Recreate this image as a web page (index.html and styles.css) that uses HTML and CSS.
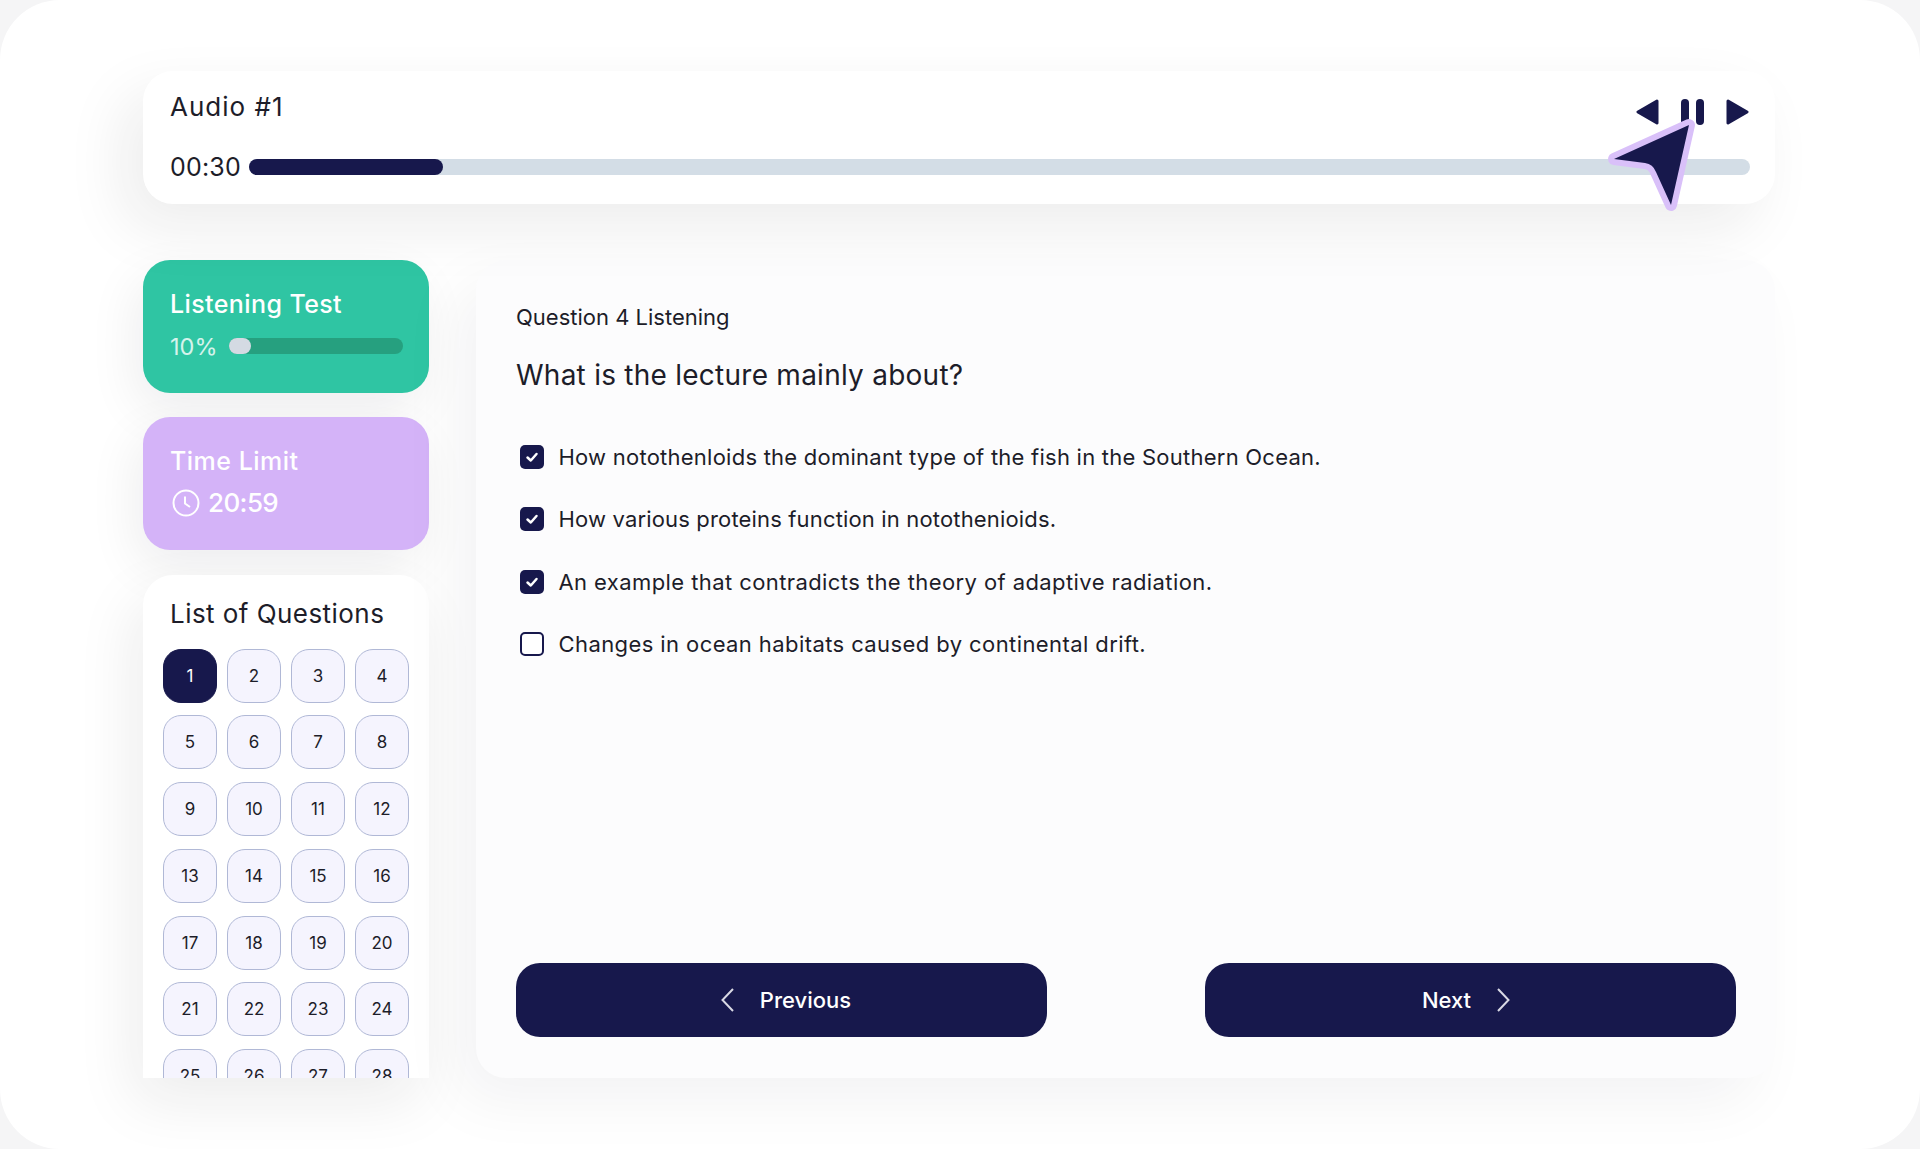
FILE: index.html
```html
<!DOCTYPE html>
<html lang="en">
<head>
    <meta charset="UTF-8">
    <meta name="viewport" content="width=device-width, initial-scale=1.0">
    <title>Listening Test</title>
    <link rel="stylesheet" href="styles.css">
</head>
<body>
    <div class="frame">
        <div class="audio-card">
            <div class="audio-head">
                <div class="audio-title">Audio #1</div>
                <div class="controls">
                    <svg class="ctrl" viewBox="0 0 23 26"><path d="M21 2 L2 13 L21 24 Z"/></svg>
                    <svg class="ctrl" viewBox="0 0 23 26"><rect x="0" y="0" width="8" height="26" rx="4"/><rect x="15" y="0" width="8" height="26" rx="4"/></svg>
                    <svg class="ctrl" viewBox="0 0 23 26"><path d="M2 2 L21 13 L2 24 Z"/></svg>
                </div>
            </div>
            <div class="audio-row">
                <span class="audio-time">00:30</span>
                <div class="audio-track"><div class="audio-fill"></div></div>
            </div>
            <svg class="cursor" viewBox="0 0 100 110" width="100" height="110">
                <path d="M89 15 L14 49 L45 53 Q53 54 56 62 L71 95 Z"/>
            </svg>
        </div>

        <div class="content">
            <div class="side">
                <div class="stat-card green">
                    <div class="stat-title">Listening Test</div>
                    <div class="stat-row">
                        <span class="percent">10%</span>
                        <div class="mini-track"><div class="mini-fill"></div></div>
                    </div>
                </div>
                <div class="stat-card purple">
                    <div class="stat-title limit">Time Limit</div>
                    <div class="stat-row">
                        <svg class="clock" viewBox="0 0 28 28" width="28" height="28">
                            <circle cx="14" cy="14" r="12.5"/>
                            <path d="M13 7.5 V14.5 L18 18"/>
                        </svg>
                        <span class="time-left">20:59</span>
                    </div>
                </div>
                <div class="list-card">
                    <div class="list-title">List of Questions</div>
                    <div class="num-grid">
                        <div class="num active">1</div>
                        <div class="num">2</div>
                        <div class="num">3</div>
                        <div class="num">4</div>
                        <div class="num">5</div>
                        <div class="num">6</div>
                        <div class="num">7</div>
                        <div class="num">8</div>
                        <div class="num">9</div>
                        <div class="num">10</div>
                        <div class="num">11</div>
                        <div class="num">12</div>
                        <div class="num">13</div>
                        <div class="num">14</div>
                        <div class="num">15</div>
                        <div class="num">16</div>
                        <div class="num">17</div>
                        <div class="num">18</div>
                        <div class="num">19</div>
                        <div class="num">20</div>
                        <div class="num">21</div>
                        <div class="num">22</div>
                        <div class="num">23</div>
                        <div class="num">24</div>
                        <div class="num">25</div>
                        <div class="num">26</div>
                        <div class="num">27</div>
                        <div class="num">28</div>
                    </div>
                </div>
            </div>

            <div class="question-card">
                <div class="q-label">Question 4 Listening</div>
                <div class="q-text">What is the lecture mainly about?</div>
                <div class="options">
                    <div class="option">
                        <span class="box checked"><svg viewBox="0 0 24 24" width="24" height="24"><path d="M7.5 12.5 L10.8 15.5 L16.5 9"/></svg></span>
                        <span>How notothenloids the dominant type of the fish in the Southern Ocean.</span>
                    </div>
                    <div class="option narrow">
                        <span class="box checked"><svg viewBox="0 0 24 24" width="24" height="24"><path d="M7.5 12.5 L10.8 15.5 L16.5 9"/></svg></span>
                        <span>How various proteins function in notothenioids.</span>
                    </div>
                    <div class="option wide">
                        <span class="box checked"><svg viewBox="0 0 24 24" width="24" height="24"><path d="M7.5 12.5 L10.8 15.5 L16.5 9"/></svg></span>
                        <span>An example that contradicts the theory of adaptive radiation.</span>
                    </div>
                    <div class="option wide">
                        <span class="box"></span>
                        <span>Changes in ocean habitats caused by continental drift.</span>
                    </div>
                </div>
                <div class="nav-buttons">
                    <div class="nav-btn prev">
                        <svg class="chev" viewBox="0 0 13 24" width="13" height="24"><path d="M12 1 L1.5 12 L12 23"/></svg>
                        <span>Previous</span>
                    </div>
                    <div class="nav-btn next">
                        <span>Next</span>
                        <svg class="chev" viewBox="0 0 13 24" width="13" height="24"><path d="M1 1 L11.5 12 L1 23"/></svg>
                    </div>
                </div>
            </div>
        </div>
    </div>
</body>
</html>
```

FILE: styles.css
```css
html, body {
    margin: 0;
    height: 100%;
    overflow: hidden;
}
body {
    background: #f5f5f6;
    font-family: Inter, "Open Sans", sans-serif;
    color: #1d1d29;
}
.frame {
    height: 1149px;
    box-sizing: border-box;
    padding: 71px 145px 0 143px;
    background: #fff;
    border-radius: 60px;
}

/* audio player */
.audio-card {
    position: relative;
    height: 133px;
    box-sizing: border-box;
    padding: 18px 26px 0 27px;
    background: #fff;
    border-radius: 30px;
    box-shadow: -20px 24px 60px rgba(20, 20, 30, 0.08);
}
.audio-head {
    display: flex;
    justify-content: space-between;
}
.audio-title {
    font-size: 26px;
    line-height: 36px;
    letter-spacing: 1px;
}
.controls {
    display: flex;
    gap: 22px;
    margin-top: 10px;
}
.ctrl {
    width: 23px;
    height: 26px;
    fill: #17184c;
    stroke: #17184c;
    stroke-linejoin: round;
    stroke-width: 3;
}
.ctrl rect { stroke: none; }
.audio-row {
    display: flex;
    align-items: center;
    gap: 8px;
    margin-top: 26px;
    margin-right: -1px;
}
.audio-time {
    width: 71px;
    font-size: 25px;
    line-height: 32px;
    letter-spacing: 0.2px;
}
.audio-track {
    flex: 1;
    height: 16px;
    background: #d3dde6;
    border-radius: 8px;
}
.audio-fill {
    width: 194px;
    height: 16px;
    background: #17184c;
    border-radius: 8px;
}
.cursor {
    position: absolute;
    left: 1457px;
    top: 39px;
}
.cursor path {
    fill: #17184c;
    stroke: #d9c0f9;
    stroke-width: 12;
    stroke-linejoin: round;
    paint-order: stroke;
}

/* two columns below the player */
.content {
    display: flex;
    gap: 47px;
    height: 818px;
    margin-top: 56px;
}
.side {
    display: flex;
    flex-direction: column;
    gap: 24px;
    width: 286px;
    flex-shrink: 0;
}
.stat-card {
    height: 133px;
    box-sizing: border-box;
    padding: 27px 26px 0 27px;
    border-radius: 27px;
    color: #fff;
    box-shadow: -8px 18px 50px rgba(20, 20, 30, 0.07);
}
.green { background: #2fc5a3; }
.purple { background: #d4b3f8; }
.stat-title {
    font-size: 25px;
    line-height: 34px;
    letter-spacing: 0.4px;
    font-weight: 500;
}
.stat-title.limit { letter-spacing: 0.5px; }
.stat-row {
    display: flex;
    align-items: center;
    height: 34px;
    margin-top: 8px;
}
.purple .stat-row { margin-top: 7px; }
.percent {
    width: 59px;
    font-size: 23.5px;
    opacity: 0.8;
}
.mini-track {
    flex: 1;
    height: 16px;
    background: #26a07f;
    border-radius: 8px;
}
.mini-fill {
    width: 22px;
    height: 16px;
    background: #d4dae3;
    border-radius: 8px;
}
.clock {
    margin: 2px 0 0 2px;
    fill: none;
    stroke: #fff;
    stroke-width: 2;
}
.time-left {
    margin-left: 8px;
    font-size: 26px;
    font-weight: 500;
    letter-spacing: -0.6px;
}
.list-card {
    flex: 1;
    min-height: 0;
    overflow: hidden;
    box-sizing: border-box;
    margin-top: 1px;
    padding: 20px 20px 0 20px;
    background: #fff;
    border-radius: 30px 30px 0 0;
    box-shadow: -10px 24px 60px rgba(20, 20, 30, 0.08);
}
.list-title {
    margin-left: 7px;
    font-size: 26px;
    line-height: 38px;
    letter-spacing: 0.45px;
}
.num-grid {
    display: grid;
    grid-template-columns: repeat(4, 54px);
    grid-auto-rows: 54px;
    column-gap: 10px;
    row-gap: 12.75px;
    margin-top: 15.5px;
}
.num {
    display: flex;
    align-items: center;
    justify-content: center;
    box-sizing: border-box;
    background: #f5f4fe;
    border: 1px solid #b0b8d6;
    border-radius: 18px;
    font-size: 17px;
}
.num.active {
    background: #17184c;
    border-color: #17184c;
    color: #fff;
}

/* question panel */
.question-card {
    flex: 1;
    display: flex;
    flex-direction: column;
    box-sizing: border-box;
    padding: 41px 39px 41px 40px;
    background: #fcfcfd;
    border-radius: 30px;
    box-shadow: -20px 24px 60px rgba(20, 20, 30, 0.05);
}
.q-label {
    font-size: 22px;
    line-height: 32px;
}
.q-text {
    margin-top: 22px;
    font-size: 28px;
    line-height: 40px;
    letter-spacing: 0.25px;
}
.options {
    flex: 1;
    display: flex;
    flex-direction: column;
    gap: 30.6px;
    margin: 45.5px 0 0 4px;
}
.option {
    display: flex;
    align-items: center;
    gap: 14.5px;
    height: 32px;
    font-size: 22px;
    letter-spacing: 0.24px;
}
.option.narrow { letter-spacing: 0.16px; }
.option.wide { letter-spacing: 0.41px; }
.box {
    box-sizing: border-box;
    width: 24px;
    height: 24px;
    border: 2.5px solid #17184c;
    border-radius: 5px;
    background: #fff;
}
.box.checked {
    background: #17184c;
    border: none;
}
.box svg {
    display: block;
    fill: none;
    stroke: #fff;
    stroke-width: 2.5;
    stroke-linecap: round;
    stroke-linejoin: round;
}
.nav-buttons {
    display: flex;
    justify-content: space-between;
}
.nav-btn {
    display: flex;
    align-items: center;
    justify-content: center;
    gap: 26px;
    width: 531px;
    height: 74px;
    box-sizing: border-box;
    background: #17184c;
    border-radius: 24px;
    color: #fff;
    font-size: 22px;
    font-weight: 500;
}
.nav-btn.prev { padding-left: 9px; }
.nav-btn.next { padding-right: 9px; }
.chev {
    fill: none;
    stroke: #d9d9e4;
    stroke-width: 2;
}
```
